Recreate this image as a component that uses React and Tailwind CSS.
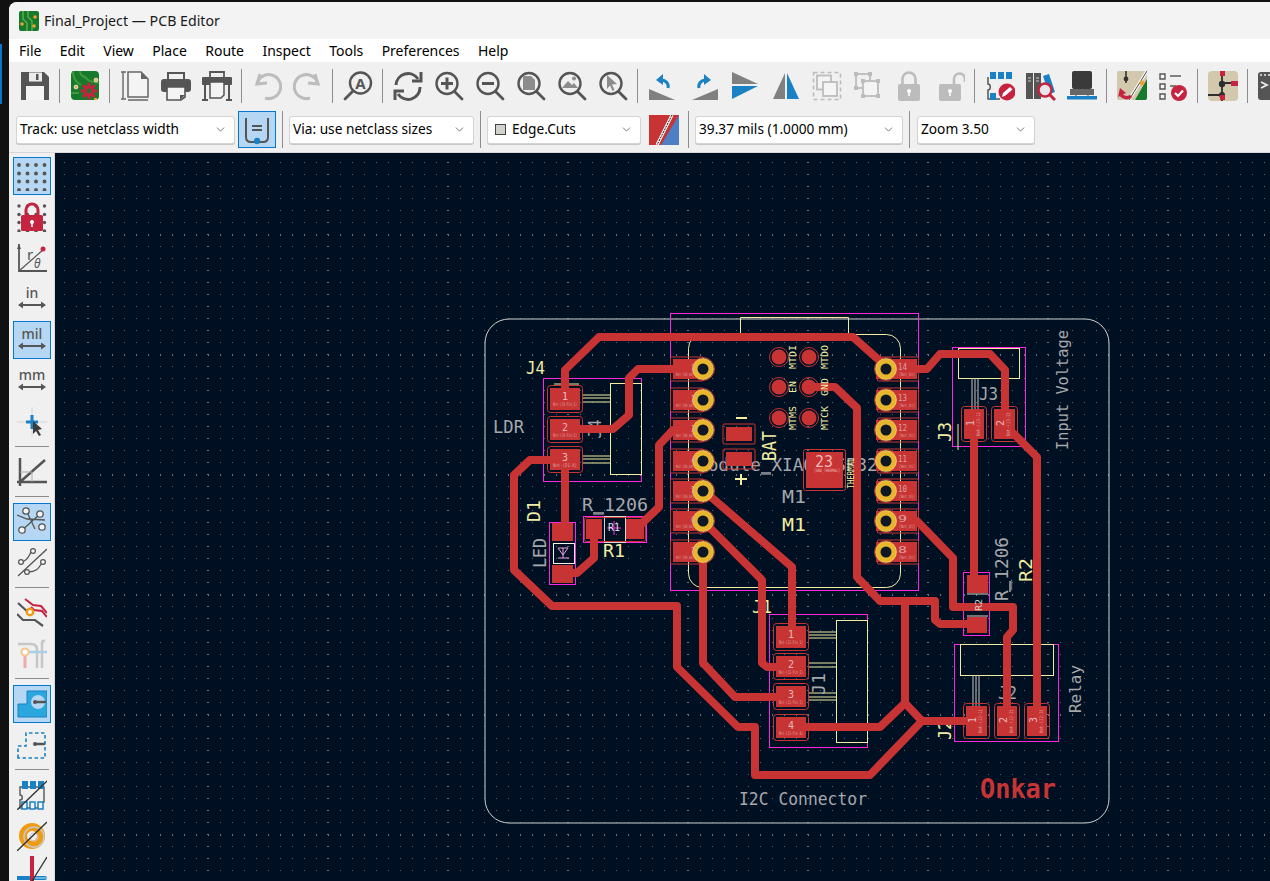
import React from 'react';
import { ChevronDown } from 'lucide-react';

const GRAY = '#555';
const OFF = '#bcbcbc';
const BLUE = '#1a81c4';
const RED = '#c5233f';

const Ico = ({ children, size = 30 }) => (
  <svg width={size} height={size} viewBox="0 0 30 30" className="block">{children}</svg>
);

const Mag = ({ children, c = GRAY }) => (
  <Ico>
    <circle cx="13" cy="12.5" r="10.5" fill="none" stroke={c} strokeWidth="2.4" />
    <path d="M20.5 20.5 28 28" stroke={c} strokeWidth="2.8" strokeLinecap="round" />
    {children}
  </Ico>
);

const Lock = ({ open }) => (
  <Ico>
    <rect x="4" y="13" width="22" height="17" rx="2" fill={OFF} />
    {open
      ? <path d="M19 13V8a5.5 5.5 0 0 1 11 0v3" fill="none" stroke={OFF} strokeWidth="2.6" />
      : <path d="M8.5 13V8a6.5 6.5 0 0 1 13 0v5" fill="none" stroke={OFF} strokeWidth="2.6" />}
    <circle cx="15" cy="20" r="2" fill="#fff" />
    <rect x="14.2" y="20" width="1.6" height="5" fill="#fff" />
  </Ico>
);

const topIcons = {
  save: (
    <Ico>
      <path d="M1 1h23l5 5v23H1z" fill={GRAY} />
      <rect x="9" y="1.5" width="13" height="9" fill="#ececec" />
      <rect x="16" y="3" width="2.5" height="6" fill={GRAY} />
      <rect x="6" y="15" width="18" height="14" fill="#f4f4f4" />
    </Ico>
  ),
  pcbGear: (
    <Ico>
      <rect x="1" y="0" width="28" height="29" rx="4" fill="#17792c" />
      <path d="M10 0c0 6 5 5 7 8s8 3 12 4M3 0c0 8 4 12 8 14M1 22h8" fill="none" stroke="#3f9a3b" strokeWidth="2" />
      <circle cx="6" cy="16" r="2" fill="#f0b060" stroke="#fff" strokeWidth="0.6" />
      <circle cx="26" cy="9" r="2" fill="#f0b060" stroke="#fff" strokeWidth="0.6" />
      <path d="M19 11.500v17M10.500 20h17M13 14l12 12M25 14 13 26" stroke={RED} strokeWidth="3" />
      <circle cx="19" cy="20" r="5.500" fill={RED} />
      <circle cx="19" cy="20" r="2.400" fill="#17792c" />
      <rect x="24" y="27" width="3" height="2" fill="#f0a030" />
    </Ico>
  ),
  pages: (
    <Ico>
      <path d="M3 1v27M1 1h5M1 28h5" stroke="#666" strokeWidth="1.4" fill="none" />
      <path d="M8 1h13l7 7v18H8z" fill="#f4f4f4" stroke="#666" strokeWidth="1.5" />
      <path d="M21 1v7h7z" fill="#666" />
      <path d="M8 29h20" stroke="#666" strokeWidth="1.6" />
    </Ico>
  ),
  print: (
    <Ico>
      <path d="M7 8V2h16v6" fill="none" stroke={GRAY} strokeWidth="2" />
      <rect x="0" y="8" width="30" height="13" rx="3" fill={GRAY} />
      <path d="M6 16h18v10l-4 3H6z" fill="#f4f4f4" stroke={GRAY} strokeWidth="1.6" />
      <path d="M24 24h-5v5z" fill={GRAY} />
    </Ico>
  ),
  plot: (
    <Ico>
      <path d="M8 7V1h14v6" fill="none" stroke={GRAY} strokeWidth="1.8" />
      <rect x="0" y="6" width="30" height="8" rx="1" fill={GRAY} />
      <path d="M3 14v14M27 14v14M0 29h6M24 29h6" stroke={GRAY} strokeWidth="2" />
      <path d="M8 11h14v13l-3 3H8z" fill="#f4f4f4" stroke={GRAY} strokeWidth="1.5" />
    </Ico>
  ),
  undo: (
    <Ico>
      <path d="M5 13A12 12 0 1 1 13 27" fill="none" stroke={OFF} strokeWidth="3" />
      <path d="M8 3 5 13l10-1" fill="none" stroke={OFF} strokeWidth="3" />
    </Ico>
  ),
  redo: (
    <Ico>
      <g transform="matrix(-1 0 0 1 30 0)">
        <path d="M5 13A12 12 0 1 1 13 27" fill="none" stroke={OFF} strokeWidth="3" />
        <path d="M8 3 5 13l10-1" fill="none" stroke={OFF} strokeWidth="3" />
      </g>
    </Ico>
  ),
  find: (
    <Ico>
      <circle cx="17.5" cy="12" r="10.5" fill="none" stroke={GRAY} strokeWidth="2.4" />
      <path d="M10 20 2 28" stroke={GRAY} strokeWidth="2.8" strokeLinecap="round" />
      <text x="17.5" y="17.5" textAnchor="middle" fontSize="15" fontWeight="700" fill={GRAY}>A</text>
    </Ico>
  ),
  refresh: (
    <Ico>
      <path d="M3 14A12 12 0 0 1 25 8" fill="none" stroke={GRAY} strokeWidth="3" />
      <path d="M28 1v9h-9" fill="none" stroke={GRAY} strokeWidth="3" />
      <path d="M27 16A12 12 0 0 1 5 23" fill="none" stroke={GRAY} strokeWidth="3" />
      <path d="M2 29v-9h9" fill="none" stroke={GRAY} strokeWidth="3" />
    </Ico>
  ),
  zoomIn: <Mag><path d="M7 12.5h12M13 6.500v12" stroke={GRAY} strokeWidth="3" /></Mag>,
  zoomOut: <Mag><path d="M7 12.5h12" stroke={GRAY} strokeWidth="3" /></Mag>,
  zoomPage: <Mag><path d="M7 5h8l4 4v10H7z" fill="#8c8c8c" /></Mag>,
  zoomObj: (
    <Mag>
      <path d="M5 17l6-7 4 4 2-2 4 5z" fill="#8c8c8c" />
      <circle cx="17" cy="7.500" r="2" fill="#8c8c8c" />
    </Mag>
  ),
  zoomSel: <Mag><path d="M9 4l10 9-5 .5 2.500 5.500-2 1-2.500-5.500L9 18z" fill="#8c8c8c" /></Mag>,
  rotCcw: (
    <Ico>
      <path d="M1 18v11h26z" fill="#808080" />
      <path d="M20 17c1-4-2-8-7-8" fill="none" stroke={BLUE} strokeWidth="3" />
      <path d="M15 3 8 9l7 5z" fill={BLUE} />
    </Ico>
  ),
  rotCw: (
    <Ico>
      <g transform="matrix(-1 0 0 1 30 0)">
        <path d="M1 18v11h26z" fill="#808080" />
        <path d="M20 17c1-4-2-8-7-8" fill="none" stroke={BLUE} strokeWidth="3" />
        <path d="M15 3 8 9l7 5z" fill={BLUE} />
      </g>
    </Ico>
  ),
  mirror: (
    <Ico>
      <path d="M2 1v12h26z" fill="#808080" />
      <path d="M2 15h26L2 28z" fill={BLUE} />
    </Ico>
  ),
  flip: (
    <Ico>
      <path d="M2 28 14 2v26z" fill="#808080" />
      <path d="M16 2 28 28H16z" fill={BLUE} />
    </Ico>
  ),
  group: (
    <Ico>
      <rect x="1.500" y="1.500" width="27" height="27" fill="none" stroke={OFF} strokeWidth="1.600" strokeDasharray="4 3" />
      <rect x="5" y="4.500" width="14" height="14" fill="#f4f4f4" stroke={OFF} strokeWidth="1.800" />
      <rect x="11" y="11" width="14" height="14" fill="#f4f4f4" stroke={OFF} strokeWidth="1.800" />
    </Ico>
  ),
  ungroup: (
    <Ico>
      <rect x="3" y="3" width="14" height="14" fill="none" stroke={OFF} strokeWidth="1.800" />
      <rect x="10" y="10" width="15" height="15" fill="#f4f4f4" stroke={OFF} strokeWidth="1.800" />
      <path d="M1 1h4v4H1zM15 1h4v4h-4zM1 15h4v4H1zM8 8h4v4H8zM23 8h4v4h-4zM8 23h4v4H8zM23 23h4v4h-4z" fill={OFF} />
    </Ico>
  ),
  lock: <Lock />,
  unlock: <Lock open />,
  fpEdit: (
    <Ico>
      <path d="M3 6v7c3 0 3 6 0 6v9h12" fill="none" stroke={GRAY} strokeWidth="1.500" />
      <path d="M5 1h6v7H5zM13 1h6v7h-6zM21 1h6v7h-6zM5 22h6v7H5z" fill={BLUE} />
      <circle cx="22" cy="21" r="8.500" fill={RED} />
      <path d="M17 26l1-4 7-6 2.500 2.500-7 6z" fill="#fff" />
    </Ico>
  ),
  libBrowse: (
    <Ico>
      <rect x="0" y="2" width="7" height="26" fill={GRAY} />
      <rect x="8" y="2" width="7" height="26" fill={GRAY} />
      <path d="M17 5l6-2 6 18-6 2z" fill={BLUE} />
      <path d="M2 7h3M2 10h3M10 7h3M10 10h3" stroke="#ccc" strokeWidth="1" />
      <circle cx="19" cy="19" r="6.500" fill="#e8e8e8" stroke={RED} strokeWidth="2.500" />
      <path d="M24 24l5 5" stroke={RED} strokeWidth="3" />
    </Ico>
  ),
  fp3d: (
    <Ico>
      <rect x="5" y="0" width="20" height="18" rx="2" fill="#3a3a3a" />
      <rect x="3" y="18" width="24" height="6" fill="#666" />
      <path d="M9 24v3M21 24v3" stroke="#888" strokeWidth="1.500" />
      <rect x="0" y="25" width="30" height="3.500" fill={BLUE} />
    </Ico>
  ),
  update: (
    <Ico>
      <rect x="0" y="0" width="30" height="29" rx="2" fill="#d2c8ae" />
      <path d="M18 29 30 8V27a2 2 0 0 1-2 2z" fill="#17792c" />
      <path d="M30 0 12 29" stroke="#fff" strokeWidth="3" />
      <path d="M30 0 12 29" stroke="#444" strokeWidth="1" />
      <circle cx="25" cy="12" r="2.400" fill="#f0a030" />
      <circle cx="9" cy="8" r="2.400" fill="#333" />
      <path d="M9 0v12" stroke="#333" strokeWidth="1.600" />
      <path d="M4 24a7 7 0 0 0 10 1" fill="none" stroke={RED} strokeWidth="3.500" />
      <path d="M1 26l2-9 6 5z" fill={RED} />
    </Ico>
  ),
  check: (
    <Ico>
      <path d="M2 3h5v5H2zM2 13h5v5H2zM2 23h5v5H2z" fill="#f4f4f4" stroke={GRAY} strokeWidth="1.400" />
      <path d="M12 5h11M12 15h6" stroke="#808080" strokeWidth="2" />
      <circle cx="21" cy="22" r="8" fill={RED} />
      <path d="M17 22l3 3 5-5.500" fill="none" stroke="#fff" strokeWidth="2.200" />
    </Ico>
  ),
  schematic: (
    <Ico>
      <rect x="0" y="0" width="30" height="30" rx="4" fill="#d2c8ae" />
      <path d="M14 0v30M0 24h14M14 12h16" stroke="#2e2e2e" strokeWidth="1.800" />
      <circle cx="14" cy="13" r="3.200" fill="#2e2e2e" />
      <circle cx="14" cy="24" r="3" fill="#2e2e2e" />
      <path d="M12 0h5v5h-5zM23 10h7v5h-7zM12 24h5v5h-5z" fill={RED} />
    </Ico>
  ),
  script: (
    <Ico>
      <rect x="0" y="1" width="30" height="28" rx="3" fill={GRAY} />
      <circle cx="3" cy="4" r="1" fill="#eee" />
      <circle cx="7" cy="4" r="1" fill="#eee" />
      <circle cx="11" cy="4" r="1" fill="#eee" />
      <path d="M3 11l6 3-6 3" fill="none" stroke="#eee" strokeWidth="1.800" />
    </Ico>
  )
};

const topRow = [
  'save', '|', 'pcbGear', '|', 'pages', 'print', 'plot', '|', 'undo', 'redo', '|', 'find', '|',
  'refresh', 'zoomIn', 'zoomOut', 'zoomPage', 'zoomObj', 'zoomSel', '|',
  'rotCcw', 'rotCw', 'mirror', 'flip', 'group', 'ungroup', 'lock', 'unlock', '|',
  'fpEdit', 'libBrowse', 'fp3d', '|', 'update', 'check', '|', 'schematic', '|', 'script'
];

const MENUS = ['File', 'Edit', 'View', 'Place', 'Route', 'Inspect', 'Tools', 'Preferences', 'Help'];

const Unit = ({ label }) => (
  <Ico>
    <text x="15" y="14" textAnchor="middle" fontSize="14" fontWeight="500" fill={GRAY}>{label}</text>
    <path d="M3 21h24" stroke={GRAY} strokeWidth="2" />
    <path d="M1 21l5-3.500v7zM29 21l-5-3.500v7z" fill={GRAY} />
  </Ico>
);

const gridDots = [4, 12.500, 20.500, 29].flatMap((y) => [2, 10.500, 19, 27.500].map((x) => [x, y]));

const leftIcons = [
  { on: true, el: <Ico>{gridDots.map(([x, y]) => <circle key={`${x}-${y}`} cx={x} cy={y} r="1.900" fill={GRAY} />)}</Ico> },
  {
    el: (
      <Ico>
        {gridDots.map(([x, y]) => <circle key={`${x}-${y}`} cx={x} cy={y} r="1.700" fill={GRAY} />)}
        <path d="M9 13V8a6 6 0 0 1 12 0v5" fill="none" stroke={RED} strokeWidth="3" />
        <rect x="4" y="13" width="22" height="16" rx="1.500" fill={RED} />
        <circle cx="15" cy="20" r="2" fill="#fff" />
        <rect x="14.200" y="20" width="1.600" height="5" fill="#fff" />
      </Ico>
    )
  },
  {
    el: (
      <Ico>
        <path d="M2 1v27h28" fill="none" stroke={GRAY} strokeWidth="1.800" />
        <path d="M2 1 0 6h4z" fill={GRAY} />
        <path d="M2 28 27 6" stroke={GRAY} strokeWidth="1.200" />
        <circle cx="26" cy="6" r="2.500" fill={RED} />
        <text x="10" y="17" fontSize="15" fill={GRAY}>r</text>
        <text x="17" y="25" fontSize="12" fontStyle="italic" fill={GRAY}>θ</text>
      </Ico>
    )
  },
  { el: <Unit label="in" /> },
  { on: true, el: <Unit label="mil" /> },
  { el: <Unit label="mm" /> },
  {
    el: (
      <Ico>
        <path d="M15 0v30M0 15h30" stroke="#d0d0d0" strokeWidth="0.800" />
        <path d="M15 8v14M9 15h12" stroke={BLUE} strokeWidth="3" />
        <path d="M16 14l9 8-4 1 3 5-2 1-3-5-3 3z" fill="#3c3c3c" />
      </Ico>
    )
  },
  '|',
  {
    el: (
      <Ico>
        <path d="M3 1v28M0 25h30M3 25 28 3" stroke={GRAY} strokeWidth="2.500" />
        <path d="M3 15h12v10" fill="none" stroke="#aaa" strokeWidth="1" />
      </Ico>
    )
  },
  '|',
  {
    on: true,
    el: (
      <Ico>
        <path d="M0 8l10 4 18 1M9 3l9 19M3 25 22 8" stroke={GRAY} strokeWidth="1.300" fill="none" />
        {[[9, 4], [23, 7], [5, 23], [25, 20]].map(([x, y]) => <circle key={x} cx={x} cy={y} r="3.200" fill="#f4f4f4" stroke={GRAY} strokeWidth="1.300" />)}
      </Ico>
    )
  },
  {
    el: (
      <Ico>
        <path d="M1 28 30 1" stroke={GRAY} strokeWidth="1.300" />
        <path d="M5 14C12 12 12 6 15 3M11 24c8 0 10-3 14-9" fill="none" stroke={GRAY} strokeWidth="1.300" />
        <circle cx="4" cy="14" r="2.400" fill="#f4f4f4" stroke={GRAY} strokeWidth="1.200" />
        <circle cx="16" cy="3" r="2.400" fill="#f4f4f4" stroke={GRAY} strokeWidth="1.200" />
        <circle cx="10" cy="24" r="2.400" fill="#f4f4f4" stroke={GRAY} strokeWidth="1.200" />
        <circle cx="26" cy="14" r="2.400" fill="#f4f4f4" stroke={GRAY} strokeWidth="1.200" />
      </Ico>
    )
  },
  '|',
  {
    el: (
      <Ico>
        <path d="M8 1l8 6 8 1 6 7" fill="none" stroke={RED} strokeWidth="2" />
        <path d="M1 5l11 10" stroke={GRAY} strokeWidth="2.200" />
        <path d="M14 9l3 3 8 1 5 6" fill="none" stroke={RED} strokeWidth="2" />
        <path d="M0 16l6 6h12l8 6" fill="none" stroke={GRAY} strokeWidth="2.200" />
        <circle cx="13" cy="14" r="3.200" fill="#fff" stroke="#f09a10" strokeWidth="2.400" />
      </Ico>
    )
  },
  {
    el: (
      <Ico>
        <path d="M1 5h13q6 0 6 6v18M28 2q-3-1-3 3v24" fill="none" stroke="#c6c6c6" strokeWidth="2.500" />
        <path d="M8 12v17" stroke="#eeaaaa" strokeWidth="3" />
        <path d="M8 13h22" stroke="#a9cfe8" strokeWidth="2.500" />
        <circle cx="8" cy="13" r="3.600" fill="#fff" stroke="#f5c78a" strokeWidth="2" />
      </Ico>
    )
  },
  '|',
  {
    on: true,
    el: (
      <Ico>
        <path d="M1 28V15h9V2h20v26z" fill="#2aa7df" stroke={BLUE} strokeWidth="1" />
        <circle cx="21" cy="13" r="7" fill="#b5d7f3" />
        <path d="M18 13h10" stroke={GRAY} strokeWidth="2.400" strokeLinecap="round" />
        <circle cx="18" cy="13" r="2" fill={GRAY} />
      </Ico>
    )
  },
  {
    el: (
      <Ico>
        <path d="M1 28V16h8V3h19v25z" fill="none" stroke={BLUE} strokeWidth="1.600" strokeDasharray="3.500 2.500" />
        <path d="M18 14h9" stroke={GRAY} strokeWidth="2.400" strokeLinecap="round" />
        <circle cx="18" cy="14" r="2" fill={GRAY} />
      </Ico>
    )
  },
  '|',
  {
    el: (
      <Ico>
        <path d="M3 7h24v15c-3 0-3 6-3 6H3v-8c3 0 3-5 0-5z" fill="none" stroke={GRAY} strokeWidth="1.400" />
        <path d="M5 1h6v8H5zM13 1h6v8h-6zM21 1h6v8h-6z" fill={BLUE} />
        <path d="M5 22h5v7H5zM13 22h5v7h-5zM21 22h5v7h-5z" fill="#f4f4f4" stroke={BLUE} strokeWidth="1.500" />
        <path d="M0 30 30 1" stroke="#333" strokeWidth="1.300" />
      </Ico>
    )
  },
  {
    el: (
      <Ico>
        <path d="M15 2a13 13 0 1 0 0 26 13 13 0 0 0 0-26zm0 8a5 5 0 1 1 0 10 5 5 0 0 1 0-10z" fill="#f09a10" />
        <circle cx="17" cy="16" r="10" fill="none" stroke="#c8c8c8" strokeWidth="1.600" />
        <circle cx="17" cy="16" r="4" fill="none" stroke="#c8c8c8" strokeWidth="1.200" />
        <path d="M0 30 30 1" stroke="#333" strokeWidth="1.300" />
      </Ico>
    )
  },
  {
    el: (
      <div className="-mt-[11px]">
        <Ico>
          <path d="M15 0v22" stroke={RED} strokeWidth="4" />
          <path d="M0 22h28" stroke={BLUE} strokeWidth="4" strokeLinecap="round" />
          <path d="M16 22h14M16 28h14" stroke="#6fb3e0" strokeWidth="2" />
          <path d="M15 18v12" stroke={RED} strokeWidth="4" />
          <path d="M12 30 30 1" stroke="#333" strokeWidth="1.300" />
        </Ico>
      </div>
    )
  }
];

const Select = ({ w, children }) => (
  <div className={`${w} h-[28px] flex items-center justify-between bg-white border border-[#d4d4d4] rounded-[3px] pl-[3px] pr-[7px] text-[13.7px] text-black shadow-[0_1px_0_#c8c8c8]`}>
    {children}
    <ChevronDown size={13} strokeWidth={1.300} className="text-[#444]" />
  </div>
);

const Sep = () => <div className="w-px h-[37px] mx-[6px] bg-[#8c8c8c]" />;

// copper, page coordinates
const TRACKS = [
  '565,392 565,370 599,337 853,337 880,361 890,369',
  '580,429 613,429 629,415 629,378 638,369 700,369',
  '565,460 530,460 514,475 514,570 552,606 677,606 677,667 738,727 755,727 755,775 870,775 922,721 970,721',
  '565,460 565,530',
  '563,573 577,573 594,558 594,530',
  '635,530 659,507 659,445 673,430 700,430',
  '703,490 792,567 792,630',
  '703,521 762,580 762,663 767,667 790,667',
  '703,552 703,663 735,697 790,697',
  '790,727 880,727 905,703 905,601',
  '905,703 922,721',
  '808,387 835,387 857,408 857,577 880,601 935,601 935,620 940,624 977,624',
  '917,521 953,558 953,607 1013,607 1013,630 1007,637 1007,715',
  '974,427 974,585',
  '1005,420 1005,370 990,354 940,354 927,369 905,369',
  '1013,433 1037,457 1037,715'
];

// x, y, w, h, number, net name, horizontal label
const PADS = [
  [550, 388, 30, 22, '1', 'Net-(J4-Pin_1)', 1],
  [550, 419, 30, 21, '2', 'Net-(J4-Pin_2)', 1],
  [550, 449, 30, 21, '3', 'Net-(D1-A)', 1],
  [776, 626, 30, 22, '1', 'Net-(J1-Pin_1)', 1],
  [776, 656, 30, 21, '2', 'Net-(J1-Pin_2)', 1],
  [776, 686, 30, 21, '3', 'Net-(J1-Pin_3)', 1],
  [776, 717, 30, 21, '4', 'Net-(J1-Pin_4)', 1],
  [964, 409, 20, 30, '1', 'Net-(J3-1)', 0],
  [994, 409, 21, 30, '2', 'Net-(J3-2)', 0],
  [966, 706, 21, 30, '1', 'Net-(J2-1)', 0],
  [997, 706, 20, 30, '2', 'Net-(J2-2)', 0],
  [1027, 706, 20, 30, '3', 'Net-(J2-3)', 0]
];

const LEFT_Y = [369, 400, 430, 461, 491, 521, 552];

const T = ({ x, y, w, size, fill = '#a6a8ab', rot, weight, children }) => (
  <text
    x={x}
    y={y}
    fontSize={size}
    fill={fill}
    fontWeight={weight}
    textAnchor={rot ? 'middle' : 'start'}
    textLength={w}
    lengthAdjust="spacingAndGlyphs"
    transform={rot ? `rotate(-90 ${x} ${y})` : undefined}
  >
    {children}
  </text>
);

const SILK = '#f2eda1';
const CRT = '#ff26e2';
const CU = '#c83434';
const PADTXT = '#dca0a0';

function PadPair({ y }) {
  return (
    <g>
      <rect x="673" y={y - 10} width="29" height="20" fill={CU} />
      <rect x="670.500" y={y - 12} width="33" height="24" rx="1" fill="none" stroke={CU} strokeWidth="1" />
      <rect x="876" y={y - 10} width="41" height="20" fill={CU} />
      <rect x="877.500" y={y - 12} width="41" height="24" rx="1" fill="none" stroke={CU} strokeWidth="1" />
    </g>
  );
}

const Board = () => (
  <svg width="1215" height="728" viewBox="55 153 1215 728" className="block font-['DejaVu_Sans_Mono',monospace]">
    <defs>
      <pattern id="dots" x="64" y="162" width="12" height="12" patternUnits="userSpaceOnUse">
        <rect width="1" height="1" fill="#566270" />
      </pattern>
      <pattern id="majX" x="87" y="162" width="120" height="12" patternUnits="userSpaceOnUse">
        <rect width="2" height="1" fill="#6a7480" />
      </pattern>
      <pattern id="majY" x="64" y="234" width="12" height="120" patternUnits="userSpaceOnUse">
        <rect width="1" height="2" fill="#6a7480" />
      </pattern>
    </defs>
    <rect x="55" y="153" width="1215" height="728" fill="#001023" />
    <rect x="55" y="153" width="1215" height="728" fill="url(#dots)" />
    <rect x="55" y="153" width="1215" height="728" fill="url(#majX)" />
    <rect x="55" y="153" width="1215" height="728" fill="url(#majY)" />

    {/* edge cuts */}
    <rect x="485" y="319" width="624" height="504" rx="24" fill="none" stroke="#d0d2cd" strokeWidth="1" />

    {/* courtyards */}
    <g fill="none" stroke={CRT} strokeWidth="1">
      <rect x="670.500" y="313.500" width="248" height="277" />
      <rect x="543.500" y="378.500" width="98" height="103" />
      <rect x="549.500" y="522.500" width="26" height="62" />
      <rect x="583.500" y="516.500" width="63" height="26" />
      <rect x="952.500" y="347.500" width="73" height="99" />
      <rect x="963.500" y="572.500" width="26" height="63" />
      <rect x="769.500" y="614.500" width="98" height="133" />
      <rect x="954.500" y="644.500" width="104" height="97" />
    </g>

    {/* silk and fab outlines */}
    <g fill="none" stroke={SILK} strokeWidth="1">
      <path d="M740.500 334V317.500H848.500V334" />
      <rect x="688.500" y="334.500" width="212" height="253" rx="14" />
      <rect x="610.500" y="383.500" width="31" height="91" />
      <path d="M583 395h27M583 398h27M583 402h27M583 456h27M583 459h27M583 463h27" />
      <path d="M554 384h25" />
      <rect x="958.500" y="348.500" width="61" height="30" />
      <path d="M972 378v31M975 378v31M978 378v31" stroke="#c8c8c0" />
      <path d="M958 424v26" />
      <rect x="836.500" y="620.500" width="31" height="122" />
      <path d="M809 632h27M809 635h27M809 638h27M809 663h27M809 667h27M809 693h27M809 697h27M809 700h27" />
      <rect x="960.500" y="644.500" width="93" height="31" />
      <path d="M973 675v31M976 675v31M979 675v31" stroke="#c8c8c0" />
      <rect x="604.500" y="516.500" width="21" height="26" stroke="#d8d8d0" />
      <rect x="553.500" y="543.500" width="21" height="20" stroke="#f4f4e8" />
      <path d="M967 594h21M967 616h21" stroke="#d8d8d0" />
    </g>
    <path d="M736 418h11M741 474v11M735 479h12" stroke={SILK} strokeWidth="2" />
    <path d="M558 558h11M563 548v10M558 548h10l-5 7z" fill="none" stroke="#f0a0e0" strokeWidth="1" />
    <path d="M607 528h14M614 521v14" stroke={CRT} strokeWidth="1" />

    {/* fab text */}
    <T x={526} y={374} w={19} size={17} fill={SILK}>J4</T>
    <T x={493} y={433} w={31} size={17}>LDR</T>
    <T x={601} y={429} w={19} size={17} rot>J4</T>
    <T x={603} y={557} w={22} size={18} fill={SILK}>R1</T>
    <T x={540} y={511} w={22} size={17} fill={SILK} rot>D1</T>
    <T x={546} y={553} w={30} size={17} rot>LED</T>
    <T x={697} y={471} w={202} size={17}>Module_XIAO-ESP32C3</T>
    <path d="M761 473h10" stroke="#a6a8ab" strokeWidth="1.500" />
    <T x={782} y={503} w={24} size={17}>M1</T>
    <T x={782} y={531} w={24} size={17} fill={SILK}>M1</T>
    <T x={979} y={400} w={19} size={17}>J3</T>
    <T x={951} y={432} w={20} size={17} fill={SILK} rot>J3</T>
    <T x={1068} y={390} w={120} size={16} rot>Input Voltage</T>
    <T x={1032} y={570} w={24} size={18} fill={SILK} rot>R2</T>
    <T x={825} y={684} w={22} size={17} rot>J1</T>
    <T x={752} y={613} w={20} size={17} fill={SILK}>J1</T>
    <T x={998} y={699} w={19} size={17}>J2</T>
    <T x={951} y={730} w={20} size={17} fill={SILK} rot>J2</T>
    <T x={1081} y={689} w={48} size={16} rot>Relay</T>
    <T x={739} y={805} w={128} size={18}>I2C Connector</T>
    <T x={980} y={798} w={76} size={26} fill={CU} weight="700">Onkar</T>

    {/* pads */}
    {PADS.map(([x, y, w, h]) => (
      <g key={`${x}-${y}`}>
        <rect x={x} y={y} width={w} height={h} fill={CU} />
        <rect x={x - 2.500} y={y - 2.500} width={w + 5} height={h + 5} rx="3" fill="none" stroke={CU} strokeWidth="1" />
      </g>
    ))}
    {LEFT_Y.map((y) => <PadPair key={y} y={y} />)}
    {[[724, 425], [724, 450]].map(([x, y]) => (
      <g key={y}>
        <rect x={x + 2} y={y + 2} width="26" height="14" fill={CU} />
        <rect x={x - 1} y={y - 1} width="32" height="20" rx="1" fill="none" stroke={CU} strokeWidth="1" />
      </g>
    ))}
    <rect x="806" y="452" width="37" height="36" fill={CU} />
    <rect x="803.500" y="449.500" width="42" height="41" rx="2" fill="none" stroke={CU} strokeWidth="1" />
    <rect x="552" y="523" width="21" height="18" fill={CU} />
    <rect x="552" y="565" width="21" height="18" fill={CU} />
    <rect x="586" y="519" width="16" height="20" fill={CU} />
    <rect x="626" y="519" width="18" height="20" fill={CU} />
    <rect x="584.500" y="517.500" width="61" height="24" rx="2" fill="none" stroke={CU} strokeWidth="1" />
    <rect x="967" y="575" width="21" height="18" fill={CU} />
    <rect x="967" y="617" width="20" height="16" fill={CU} />
    {[779, 809].flatMap((x) => [357, 387, 418].map((y) => (
      <g key={`${x}-${y}`}>
        <circle cx={x} cy={y} r="7.500" fill={CU} />
        <circle cx={x} cy={y} r="9.500" fill="none" stroke={CU} strokeWidth="1" />
      </g>
    )))}

    {/* tracks */}
    <g fill="none" stroke={CU} strokeWidth="8" strokeLinejoin="round" strokeLinecap="round">
      {TRACKS.map((p) => <polyline key={p} points={p} />)}
    </g>

    {/* vias */}
    {[703, 886].flatMap((x) => LEFT_Y.map((y) => (
      <g key={`${x}-${y}`}>
        <circle cx={x} cy={y} r="11.500" fill="none" stroke={CU} strokeWidth="1" />
        <circle cx={x} cy={y} r="10.500" fill="#e8b62e" stroke="#f6e27a" strokeWidth="0.600" />
        <circle cx={x} cy={y} r="5.500" fill="#0e1726" />
      </g>
    )))}

    {/* pad names and small silk on top */}
    {PADS.map(([x, y, w, h, n, net, horiz]) => horiz ? (
      <g key={`n-${x}-${y}`}>
        <T x={x + w / 2 - 3} y={y + 12} w={6} size={11} fill="#eab8b8">{n}</T>
        <T x={x + 3} y={y + 18} w={w - 6} size={5} fill={PADTXT}>{net}</T>
      </g>
    ) : (
      <g key={`n-${x}-${y}`}>
        <T x={x + 10} y={y + 14} w={6} size={11} fill="#eab8b8" rot>{n}</T>
        <T x={x + 16} y={y + 15} w={h - 6} size={5} fill={PADTXT} rot>{net}</T>
      </g>
    ))}
    {LEFT_Y.map((y, i) => (
      <g key={`lbl-${y}`}>
        <T x={691} y={y + 2} w={5} size={8} fill={PADTXT}>{i + 1}</T>
        <T x={676} y={y + 7} w={18} size={4.500} fill={PADTXT}>Net-[D0_A0]</T>
        <T x={898} y={y + 1} w={9} size={9} fill={PADTXT}>{14 - i}</T>
        <T x={899} y={y + 7} w={16} size={4.500} fill={PADTXT}>[Net_D1]</T>
      </g>
    ))}
    <T x={815} y={467} w={18} size={16} fill="#eab8b8">23</T>
    <T x={814} y={472} w={26} size={4.500} fill="#eab8b8">[GND_THERMAL]</T>
    <T x={854} y={473} w={31} size={8.500} fill={SILK} rot>THERMAL</T>
    <T x={776} y={446} w={30} size={19} fill={SILK} rot>BAT</T>
    {[['MTDI', 357], ['EN', 387], ['MTMS', 418]].map(([s, y]) => (
      <T key={s} x={796} y={y} w={s.length * 6} size={9.500} fill={SILK} rot>{s}</T>
    ))}
    {[['MTDO', 357], ['GND', 387], ['MTCK', 418]].map(([s, y]) => (
      <T key={s} x={828} y={y} w={s.length * 6} size={9.500} fill={SILK} rot>{s}</T>
    ))}
    <T x={608} y={531} w={12} size={10} fill="#e0e0e0">R1</T>
    <T x={982} y={605} w={12} size={9} fill="#d8d8d8" rot>R2</T>
    <T x={582} y={511} w={66} size={18}>R_1206</T>
    <path d="M593 513h11" stroke="#a6a8ab" strokeWidth="1.500" />
    <T x={1008} y={569} w={64} size={18} rot>R_1206</T>
    <path d="M1010 581v11" stroke="#a6a8ab" strokeWidth="1.500" />
  </svg>
);

export default function App() {
  return (
    <div className="w-[1270px] h-[881px] overflow-hidden relative bg-[#111] pt-[2px] pl-[9px] font-['Noto_Sans','Open_Sans',sans-serif]">
      <div className="absolute left-0 top-[44px] w-[2px] h-[60px] bg-[#0078d4]" />
      <div className="w-[1261px] h-[879px] flex flex-col bg-[#f0f0f0] rounded-tl-[8px] overflow-hidden">
        {/* title */}
        <div className="h-[37px] shrink-0 bg-[#f3f3f3] flex items-center pl-[10px] gap-[5px] text-[14.2px] text-[#1a1a1a]">
          <svg width="20" height="20" viewBox="0 0 20 20" className="block">
            <rect width="20" height="20" rx="2" fill="#17792c" />
            <path d="M4 0v8l4 4v8M9 0v6l4 4v10" fill="none" stroke="#55b04a" strokeWidth="1.500" />
            <circle cx="16" cy="6" r="1.800" fill="#f0a030" />
            <circle cx="3" cy="13" r="1.800" fill="#f0a030" />
            <circle cx="15" cy="15" r="1.800" fill="#f0a030" />
          </svg>
          <span>Final_Project — PCB Editor</span>
        </div>
        {/* menu */}
        <div className="h-[23px] shrink-0 bg-white flex items-center pl-[10px] gap-[18.4px] text-[14px] text-black">
          {MENUS.map((m) => <span key={m}>{m}</span>)}
        </div>
        {/* main toolbar */}
        <div className="h-[48px] shrink-0 flex items-center pl-[5px]">
          {topRow.map((k, i) => k === '|'
            ? <div key={i} className="w-[9px] shrink-0 flex justify-center"><div className="w-px h-[34px] bg-[#8c8c8c]" /></div>
            : <div key={i} className="w-[41px] shrink-0 flex justify-center">{topIcons[k]}</div>)}
        </div>
        {/* aux toolbar */}
        <div className="h-[43px] shrink-0 flex items-center pl-[7px] pb-[3px] border-b border-[#d8d8d8]">
          <Select w="w-[219px]">Track: use netclass width</Select>
          <div className="w-[38px] h-[37px] ml-[3px] flex items-center justify-center bg-[#b5d7f3] border border-[#0078d4]">
            <svg width="30" height="30" viewBox="0 0 30 30" className="block">
              <path d="M4 3v19q0 5 5 5h12q5 0 5-5V3" fill="none" stroke="#555" strokeWidth="2" />
              <path d="M10 11h10M10 15h10" stroke="#555" strokeWidth="1.800" />
              <circle cx="15" cy="26" r="3.200" fill="#1a81c4" />
            </svg>
          </div>
          <Sep />
          <Select w="w-[185px]">Via: use netclass sizes</Select>
          <Sep />
          <Select w="w-[154px]">
            <span className="flex items-center gap-[6px] pl-[4px]">
              <span className="w-[11px] h-[11px] bg-[#d0d2cd] border border-[#444]" />
              Edge.Cuts
            </span>
          </Select>
          <svg width="30" height="30" viewBox="0 0 30 30" className="block ml-[8px] mr-[3px] shrink-0">
            <rect width="30" height="30" fill="#c83434" />
            <path d="M30 0v30H12z" fill="#4d7fc4" />
            <path d="M23 0 8 30" stroke="#fff" strokeWidth="3" />
            <path d="M23 0 8 30" stroke="#111" strokeWidth="1" strokeDasharray="2 1" />
          </svg>
          <Sep />
          <Select w="w-[208px]">39.37 mils (1.0000 mm)</Select>
          <Sep />
          <div className="ml-[1px]">
            <Select w="w-[118px]">Zoom 3.50</Select>
          </div>
        </div>
        <div className="flex-1 min-h-0 flex">
          {/* left toolbar */}
          <div className="w-[46px] shrink-0 pt-[2px] flex flex-col items-center border-r border-[#d8d8d8] overflow-hidden">
            {leftIcons.map((it, i) => it === '|'
              ? <div key={i} className="h-[9px] shrink-0 flex items-center"><div className="w-[34px] h-px bg-[#8c8c8c]" /></div>
              : (
                <div key={i} className="h-[41px] shrink-0 flex items-center justify-center">
                  <div className={`w-[38px] h-[38px] flex items-center justify-center ${it.on ? 'bg-[#b5d7f3] border border-[#0078d4]' : ''}`}>
                    {it.el}
                  </div>
                </div>
              ))}
          </div>
          <Board />
        </div>
      </div>
    </div>
  );
}
